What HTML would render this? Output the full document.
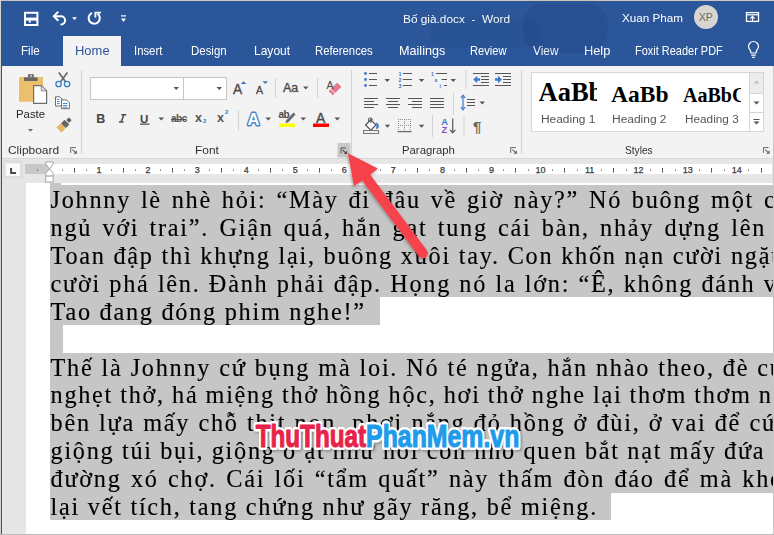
<!DOCTYPE html>
<html><head><meta charset="utf-8">
<style>
*{margin:0;padding:0;box-sizing:border-box}
html,body{width:774px;height:535px;overflow:hidden;background:#fff;font-family:"Liberation Sans",sans-serif;position:relative}
.a{position:absolute}
#top{left:0;top:0;width:774px;height:66px;background:#2b579a}
.tab{position:absolute;top:43.2px;font-size:12.4px;color:#fff;white-space:nowrap;line-height:16px;transform-origin:0 0}
#hometab{left:63px;top:36px;width:58px;height:30px;background:#f3f3f3}
#ribbon{left:0;top:66px;width:774px;height:92px;background:#f3f3f3}
.lbl{position:absolute;font-size:11.5px;color:#333;white-space:nowrap;line-height:14px;transform-origin:0 0}
.sep{position:absolute;width:1px;background:#d4d4d4}
#rulerbg{left:0;top:158px;width:774px;height:25px;background:#e6e6e6;border-top:1px solid #d6d6d6}
#doc{left:0;top:183px;width:774px;height:352px;background:#e6e6e6}
#page{left:26px;top:183px;width:760px;height:351px;background:#fff}
.sel{position:absolute;background:#c6c6c6}
.ln{position:absolute;left:50px;font-family:"Liberation Serif",serif;font-size:24.27px;line-height:28px;height:28px;color:#000;white-space:nowrap;letter-spacing:1.733px;margin-left:0.52px;opacity:0.999;-webkit-text-stroke:0.15px #000}
</style></head><body>
<div id="top" class="a"></div>
<div id="hometab" class="a"></div>
<div id="t_file" class="tab" style="left:21.06px;transform:scaleX(0.9380)">File</div>
<div id="t_home" class="tab" style="left:74.71px;color:#2b579a;transform:scaleX(1.0468)">Home</div>
<div id="t_insert" class="tab" style="left:134.10px;transform:scaleX(0.9134)">Insert</div>
<div id="t_design" class="tab" style="left:191.05px;transform:scaleX(0.9245)">Design</div>
<div id="t_layout" class="tab" style="left:253.85px;transform:scaleX(0.9701)">Layout</div>
<div id="t_ref" class="tab" style="left:315.27px;transform:scaleX(0.9107)">References</div>
<div id="t_mail" class="tab" style="left:398.98px;transform:scaleX(1.0201)">Mailings</div>
<div id="t_review" class="tab" style="left:469.94px;transform:scaleX(0.9017)">Review</div>
<div id="t_view" class="tab" style="left:532.60px;transform:scaleX(0.9563)">View</div>
<div id="t_help" class="tab" style="left:584.15px;transform:scaleX(1.0327)">Help</div>
<div id="t_foxit" class="tab" style="left:634.94px;transform:scaleX(0.8855)">Foxit Reader PDF</div>
<div id="t_title" class="tab" style="left:403.34px;top:10.5px;font-size:11.4px;transform:scaleX(1.0390)">Bố già.docx&nbsp; - &nbsp;Word</div>
<div id="t_user" class="tab" style="left:622.00px;top:9.5px;font-size:11.4px;transform:scaleX(1.0227)">Xuan Pham</div>
<svg class="a" style="left:0;top:0" width="774" height="66" viewBox="0 0 774 66">
 <rect x="523" y="3" width="85" height="50" rx="22" fill="#001040" opacity="0.09"/>
 <rect x="430" y="18" width="110" height="30" rx="15" fill="#001040" opacity="0.05"/>
 <!-- save -->
 <g fill="none" stroke="#fff" stroke-width="2">
  <rect x="25" y="12.8" width="12.4" height="12.2"/>
 </g>
 <rect x="25" y="17.6" width="12.4" height="3" fill="#fff"/>
 <rect x="28.8" y="20.5" width="2" height="2" fill="#fff"/>
 <!-- undo -->
 <path d="M54.5 16.2 H61 A4.1 4.1 0 0 1 61 24.4 H60.5" fill="none" stroke="#fff" stroke-width="2"/>
 <path d="M57.6 12.4 L53.8 16.2 L57.6 20" fill="none" stroke="#fff" stroke-width="2" stroke-linecap="square"/>
 <path d="M72 17.2 H77 L74.5 20 Z" fill="#fff"/>
 <!-- redo -->
 <path d="M92 12.9 A5.6 5.6 0 1 0 97.6 13.6" fill="none" stroke="#fff" stroke-width="2"/>
 <path d="M95.4 17.6 V12.6 H100.9" fill="none" stroke="#fff" stroke-width="1.8"/>
 <!-- customize -->
 <rect x="121" y="15.3" width="5" height="1.2" fill="#fff"/>
 <path d="M121 18.4 H126 L123.5 21.9 Z" fill="#fff"/>
 <!-- avatar -->
 <circle cx="706" cy="17" r="12" fill="#d8d5d1"/>
 <text x="705.8" y="21" font-family="Liberation Sans" font-size="10.6" fill="#6a6a6a" text-anchor="middle">XP</text>
 <!-- ribbon display -->
 <rect x="746.5" y="12.6" width="12" height="8.8" fill="none" stroke="#fff" stroke-width="1.3"/>
 <rect x="746.5" y="14.2" width="12" height="1.2" fill="#fff"/>
 <path d="M752.5 21.4 V17" stroke="#fff" stroke-width="1.2"/>
 <path d="M750.3 18.6 L752.5 16.4 L754.7 18.6" fill="none" stroke="#fff" stroke-width="1.2"/>
 <!-- lightbulb -->
 <path d="M751 53 C751 50 748.5 49 748.5 46.5 A5 5 0 0 1 758.5 46.5 C758.5 49 756 50 756 53 Z" fill="none" stroke="#fff" stroke-width="1.2"/>
 <path d="M751.3 55.2 H755.7 M752.2 57.3 H754.8" stroke="#fff" stroke-width="1.2"/>
</svg>

<div id="ribbon" class="a"></div>
<div id="l_paste" class="lbl" style="left:15.90px;top:107px;font-size:11.6px;color:#262626;transform:scaleX(0.9805)">Paste</div>
<div id="l_clip" class="lbl" style="left:8.00px;top:142.5px;transform:scaleX(1.0369)">Clipboard</div>
<div id="l_font" class="lbl" style="left:195.46px;top:142.5px;transform:scaleX(1.0371)">Font</div>
<div id="l_para" class="lbl" style="left:401.83px;top:143px;transform:scaleX(0.9849)">Paragraph</div>
<div id="l_styles" class="lbl" style="left:625.00px;top:142.5px;transform:scaleX(0.8840)">Styles</div>
<div id="fontbox" class="a" style="left:90px;top:77px;width:94px;height:23px;background:#fff;border:1px solid #c6c6c6"></div>
<div id="sizebox" class="a" style="left:183px;top:77px;width:44px;height:23px;background:#fff;border:1px solid #c6c6c6"></div>
<div class="a" style="left:531px;top:72px;width:233px;height:60px;background:#fff;border:1px solid #d6d6d6"></div>
<div class="a" style="left:749px;top:73px;width:14px;height:20px;background:#ececec;border-left:1px solid #d6d6d6"></div>
<div class="a" style="left:749px;top:93px;width:14px;height:38px;border-left:1px solid #d6d6d6;border-top:1px solid #d6d6d6"></div>
<div class="a" style="left:749px;top:112px;width:14px;height:1px;background:#d6d6d6"></div>
<div class="a" style="left:538.5px;top:76px;width:58px;height:32px;overflow:hidden;white-space:nowrap;font-family:'Liberation Serif',serif;font-weight:bold;font-size:26.5px;line-height:32px;color:#000">AaBb</div>
<div class="a" style="left:611px;top:79px;white-space:nowrap;font-family:'Liberation Serif',serif;font-weight:bold;font-size:23.5px;line-height:30px;color:#000;letter-spacing:0px">AaBb</div>
<div class="a" style="left:683px;top:80px;width:58px;height:30px;overflow:hidden;white-space:nowrap;font-family:'Liberation Serif',serif;font-weight:bold;font-size:20px;line-height:30px;color:#000">AaBbCc</div>
<div id="l_h1" class="lbl" style="left:540.79px;top:111.5px;font-size:11.7px;color:#555;transform:scaleX(1.0195)">Heading 1</div>
<div id="l_h2" class="lbl" style="left:612.49px;top:111.5px;font-size:11.7px;color:#555;transform:scaleX(1.0232)">Heading 2</div>
<div id="l_h3" class="lbl" style="left:684.98px;top:111.5px;font-size:11.7px;color:#555;transform:scaleX(1.0079)">Heading 3</div>
<svg class="a" style="left:0;top:66px" width="774" height="92" viewBox="0 66 774 92">
 <!-- separators -->
 <g fill="#d2d2d2">
  <rect x="81" y="70" width="1" height="84"/>
  <rect x="351" y="70" width="1" height="84"/>
  <rect x="521" y="70" width="1" height="84"/>
  <rect x="275" y="78" width="1" height="20"/>
  <rect x="317" y="78" width="1" height="20"/>
  <rect x="238" y="110" width="1" height="21"/>
  <rect x="465.5" y="70" width="1" height="19"/>
  <rect x="453" y="93" width="1" height="22"/>
  <rect x="432" y="115" width="1" height="22"/>
  <rect x="463.5" y="115" width="1" height="22"/>
 </g>
 <!-- launchers -->
 <path d="M70.7 152.9 V147.6 H75.8" fill="none" stroke="#666" stroke-width="1"/><path d="M72.4 149.6 L75.7 152.7" stroke="#666" stroke-width="1.1"/><path d="M73.4 153.7 H76.9 V150.2 Z" fill="#666"/>
 <path d="M510.7 152.9 V147.6 H515.8" fill="none" stroke="#666" stroke-width="1"/><path d="M512.4 149.6 L515.7 152.7" stroke="#666" stroke-width="1.1"/><path d="M513.4 153.7 H516.9 V150.2 Z" fill="#666"/>
 <path d="M763.4 152.9 V147.6 H768.5" fill="none" stroke="#666" stroke-width="1"/><path d="M765.1 149.6 L768.4 152.7" stroke="#666" stroke-width="1.1"/><path d="M766.1 153.7 H769.6 V150.2 Z" fill="#666"/>
 <rect x="337.5" y="143" width="13" height="14.5" fill="#c8c8c8"/>
 <path d="M341.0 153.3 V148.0 H346.1" fill="none" stroke="#505050" stroke-width="1"/><path d="M342.7 150.0 L346.0 153.1" stroke="#505050" stroke-width="1.1"/><path d="M343.7 154.1 H347.2 V150.6 Z" fill="#505050"/>
 <!-- paste -->
 <path d="M19 78.5 Q19 77 20.5 77 H43 V101.8 H19 Z" fill="#eabf6e"/>
 <rect x="24" y="77.4" width="13.6" height="3.6" fill="#686868"/>
 <rect x="28" y="74.2" width="5.8" height="3.4" fill="#686868"/>
 <rect x="30.2" y="75.3" width="1.6" height="1.4" fill="#f3f3f3"/>
 <path d="M33.6 85.6 H41.3 L46.6 90.9 V103.3 H33.6 Z" fill="#fff" stroke="#6e6e6e" stroke-width="1.2"/>
 <path d="M41.3 85.6 L46.6 90.9 H41.3 Z" fill="#e6e6e6" stroke="#6e6e6e" stroke-width="0.8"/>
 <path d="M28 129 H33 L30.5 131.8 Z" fill="#6a6a6a"/>
 <!-- scissors -->
 <circle cx="58.6" cy="84" r="2.7" fill="none" stroke="#3a7dc9" stroke-width="1.3"/>
 <circle cx="67.1" cy="84" r="2.7" fill="none" stroke="#3a7dc9" stroke-width="1.3"/>
 <path d="M58.8 72.6 L65.4 81.6 M67.4 72.6 L60.8 81.6" stroke="#686868" stroke-width="1.7"/>
 <!-- copy -->
 <path d="M55.5 96.8 H59.8 L61.8 98.8 V106 H55.5 Z" fill="#fff" stroke="#6e6e6e" stroke-width="1"/>
 <path d="M61.6 99.9 H66.6 L69.4 102.7 V108.7 H61.6 Z" fill="#fff" stroke="#6e6e6e" stroke-width="1"/>
 <path d="M57 99.5 H59.5 M57 101.5 H59.5 M57 103.5 H59.5 M63 103.5 H67.5 M63 105.5 H67.5 M63 107.3 H67.5" stroke="#3a7dc9" stroke-width="0.9"/>
 <!-- format painter -->
 <g transform="translate(65.1,124) rotate(-45) scale(0.9)">
  <path d="M-2.6 -3.6 L-9.6 -4.3 L-9.6 4.3 L-2.6 3.6 Z" fill="#eab86a"/>
  <rect x="-2.6" y="-3.8" width="5.6" height="7.6" rx="0.8" fill="#646464"/>
  <rect x="4" y="-2.3" width="4.2" height="4.6" rx="1.2" fill="#646464"/>
 </g>
 <!-- dropdown arrows for boxes -->
 <path d="M173.5 87 H179 L176.25 90 Z" fill="#555"/>
 <path d="M216.5 87 H222 L219.25 90 Z" fill="#555"/>
 <!-- grow/shrink -->
 <path d="M240.8 84 L243.6 81.2 L246.4 84 Z" fill="#3c78c3"/>
 <path d="M262.6 81.2 L268 81.2 L265.3 84 Z" fill="#3c78c3"/>
 <path d="M303 86.5 H308.5 L305.75 89.5 Z" fill="#555"/>
 <!-- clear formatting -->
 <g transform="translate(335,89) rotate(-45) scale(0.86)"><rect x="-7" y="-3.4" width="14" height="6.8" rx="0.6" fill="#e57a8c"/><rect x="-4.2" y="-3.6" width="0.9" height="7.2" fill="#f3f3f3"/></g>
 <!-- row 2 arrows -->
 <path d="M158.5 117.5 H164 L161.25 120.5 Z" fill="#555"/>
 <path d="M265.5 117.5 H271 L268.25 120.5 Z" fill="#555"/>
 <path d="M300.5 117.5 H306 L303.25 120.5 Z" fill="#555"/>
 <path d="M334.5 117.5 H340 L337.25 120.5 Z" fill="#555"/>
 <!-- italic -->
 <path d="M121.3 114.8 H126.3 M123.9 114.8 L121.1 122 M118.9 122 H123.6" fill="none" stroke="#505050" stroke-width="1.6"/>
 <!-- underline -->
 <rect x="140" y="123.5" width="9.5" height="1.2" fill="#444"/>
 <!-- text effects -->
 <text x="247.6" y="124.6" font-family="Liberation Sans" font-weight="bold" font-size="16.5" fill="#fff" stroke="#4a86cc" stroke-width="2.8" stroke-linejoin="round" paint-order="stroke">A</text>
 <!-- highlight -->
 <rect x="279" y="123.5" width="16" height="3.5" fill="#ffff00"/>
 <path d="M286 120.5 L293.5 112.5 L295.5 114.5 L288 122.5 L285.5 123 Z" fill="#6a6a6a"/>
 <rect x="313" y="123.5" width="16" height="3.5" fill="#ff0000"/>
 <!-- paragraph: bullets -->
 <g fill="#3c78c3"><circle cx="365.5" cy="73.5" r="1.4"/><circle cx="365.5" cy="79.5" r="1.4"/><circle cx="365.5" cy="85.5" r="1.4"/></g>
 <g stroke="#555" stroke-width="1"><path d="M369 73.5 H377 M369 79.5 H377 M369 85.5 H377"/></g>
 <path d="M384.5 79 H390 L387.25 82 Z" fill="#555"/>
 <!-- numbering -->
 <g fill="#3c78c3" font-family="Liberation Sans" font-size="5.5" font-weight="bold"><text x="398.5" y="75.8">1</text><text x="398.5" y="81.8">2</text><text x="398.5" y="87.8">3</text></g>
 <g stroke="#555" stroke-width="1"><path d="M403 73.5 H412 M403 79.5 H412 M403 85.5 H412"/></g>
 <path d="M418.8 79 H424.3 L421.55 82 Z" fill="#555"/>
 <!-- multilevel -->
 <g fill="#3c78c3" font-family="Liberation Sans" font-size="5" font-weight="bold"><text x="431" y="75.8">1</text><text x="434.5" y="81.5">a</text><text x="439.5" y="87.5">i</text></g>
 <g stroke="#555" stroke-width="1"><path d="M436 73.5 H447 M441.5 79.5 H447 M444 85.5 H447"/></g>
 <path d="M450.5 79 H456 L453.25 82 Z" fill="#555"/>
 <!-- indent -->
 <g stroke="#555" stroke-width="1"><path d="M473 73.5 H489 M481 76.5 H489 M481 79.5 H489 M481 82.5 H489 M473 85.5 H489"/></g>
 <path d="M473.2 79.5 L477.2 75.8 V83.2 Z" fill="#3a7dc9"/><path d="M476 79.5 H480" stroke="#3a7dc9" stroke-width="2.6"/>
 <g stroke="#555" stroke-width="1"><path d="M495 73.5 H511 M503 76.5 H511 M503 79.5 H511 M503 82.5 H511 M495 85.5 H511"/></g>
 <path d="M502 79.5 L498 75.8 V83.2 Z" fill="#3a7dc9"/><path d="M495 79.5 H499" stroke="#3a7dc9" stroke-width="2.6"/>
 <!-- alignment -->
 <g stroke="#555" stroke-width="1">
  <path d="M364 98.5 H378 M364 101.5 H374 M364 104.5 H378 M364 107.5 H374"/>
  <path d="M386 98.5 H400 M388 101.5 H398 M386 104.5 H400 M388 107.5 H398"/>
  <path d="M408 98.5 H422 M412 101.5 H422 M408 104.5 H422 M412 107.5 H422"/>
  <path d="M430 98.5 H444 M430 101.5 H444 M430 104.5 H444 M430 107.5 H444"/>
  <path d="M467 99.5 H475 M467 102.5 H475 M467 105.5 H475"/>
 </g>
 <path d="M463 95.5 V109.5" stroke="#3c78c3" stroke-width="1.2"/>
 <path d="M460.8 98 L463 95.2 L465.2 98 M460.8 107 L463 109.8 L465.2 107" fill="none" stroke="#3c78c3" stroke-width="1.2"/>
 <path d="M479.5 101.5 H485 L482.25 104.5 Z" fill="#555"/>
 <!-- shading -->
 <path d="M365.6 125 L370.8 119.8 L376 125 L370.8 130.2 Z" fill="#fff" stroke="#505050" stroke-width="1.15"/>
 <path d="M368.6 121.5 V118.9 Q368.6 118.2 369.3 118.2 H371.4 Q372.1 118.2 372.1 118.9 V120.3" fill="none" stroke="#505050" stroke-width="1"/>
 <path d="M370.9 118.6 V123.2" stroke="#505050" stroke-width="1"/>
 <path d="M376.2 122.3 Q379.6 124 378.6 127.6 Q377.8 129.4 376.3 129.2 Z" fill="#3a7dc9"/>
 <rect x="363.6" y="130.6" width="15" height="2.8" fill="#fff" stroke="#6a6a6a" stroke-width="1"/>
 <path d="M384.8 124.8 H390.2 L387.5 127.8 Z" fill="#555"/>
 <!-- borders -->
 <g fill="#8a8a8a"><rect x="398" y="119.0" width="1" height="1"/><rect x="398" y="125.0" width="1" height="1"/><rect x="400" y="119.0" width="1" height="1"/><rect x="400" y="125.0" width="1" height="1"/><rect x="402" y="119.0" width="1" height="1"/><rect x="402" y="125.0" width="1" height="1"/><rect x="404" y="119.0" width="1" height="1"/><rect x="404" y="125.0" width="1" height="1"/><rect x="406" y="119.0" width="1" height="1"/><rect x="406" y="125.0" width="1" height="1"/><rect x="408" y="119.0" width="1" height="1"/><rect x="408" y="125.0" width="1" height="1"/><rect x="410" y="119.0" width="1" height="1"/><rect x="410" y="125.0" width="1" height="1"/><rect x="398" y="119" width="1" height="1"/><rect x="404" y="119" width="1" height="1"/><rect x="410" y="119" width="1" height="1"/><rect x="398" y="121" width="1" height="1"/><rect x="404" y="121" width="1" height="1"/><rect x="410" y="121" width="1" height="1"/><rect x="398" y="123" width="1" height="1"/><rect x="404" y="123" width="1" height="1"/><rect x="410" y="123" width="1" height="1"/><rect x="398" y="125" width="1" height="1"/><rect x="404" y="125" width="1" height="1"/><rect x="410" y="125" width="1" height="1"/><rect x="398" y="127" width="1" height="1"/><rect x="404" y="127" width="1" height="1"/><rect x="410" y="127" width="1" height="1"/><rect x="398" y="129" width="1" height="1"/><rect x="404" y="129" width="1" height="1"/><rect x="410" y="129" width="1" height="1"/><rect x="398" y="131" width="1" height="1"/><rect x="404" y="131" width="1" height="1"/><rect x="410" y="131" width="1" height="1"/></g>
 <rect x="397.5" y="131" width="14" height="1.2" fill="#666"/>
 <path d="M418.8 124.8 H424.3 L421.55 127.8 Z" fill="#555"/>
 <!-- sort -->
 <text x="441.2" y="125.3" font-family="Liberation Sans" font-size="9.4" font-weight="bold" fill="#3c78c3">A</text>
 <text x="441.6" y="133" font-family="Liberation Sans" font-size="9.4" font-weight="bold" fill="#8a4fc4">Z</text>
 <path d="M452.7 118.5 V132.5" stroke="#555" stroke-width="1.2"/>
 <path d="M450 129.8 L452.7 132.8 L455.4 129.8" fill="none" stroke="#555" stroke-width="1.2"/>
 <!-- pilcrow -->
 <text x="473" y="132" font-family="Liberation Sans" font-size="15" font-weight="bold" fill="#666">¶</text>
 <!-- styles scroll arrows -->
 <path d="M753.5 83.5 L756.5 80.5 L759.5 83.5 Z" fill="#c0c0c0"/>
 <path d="M753.5 101.5 H759.5 L756.5 104.5 Z" fill="#555"/>
 <rect x="753.5" y="119" width="6" height="1" fill="#555"/>
 <path d="M753.5 121.5 H759.5 L756.5 124.5 Z" fill="#555"/>
</svg>
<div class="a" style="left:96.3px;top:112px;font-weight:bold;font-size:12.5px;color:#444;line-height:14px">B</div>

<div class="a" style="left:140px;top:111.5px;font-weight:bold;font-size:11.5px;color:#444;line-height:14px">U</div>
<div class="a" style="left:171px;top:112px;font-weight:bold;font-size:10px;color:#555;line-height:14px;letter-spacing:-0.5px;text-decoration:line-through">abc</div>
<div class="a" style="left:195px;top:111px;font-weight:bold;font-size:12.5px;color:#555;line-height:14px">x</div>
<div class="a" style="left:203px;top:117px;font-weight:bold;font-size:6px;color:#3c78c3;line-height:8px">2</div>
<div class="a" style="left:217px;top:111px;font-weight:bold;font-size:12.5px;color:#555;line-height:14px">x</div>
<div class="a" style="left:225px;top:108px;font-weight:bold;font-size:6px;color:#3c78c3;line-height:8px">2</div>
<div class="a" style="left:233px;top:82.6px;font-size:13.8px;color:#4a4a4a;line-height:14px;-webkit-text-stroke:0.35px #4a4a4a">A</div>
<div class="a" style="left:256px;top:83.5px;font-size:10.5px;color:#4a4a4a;line-height:12px;-webkit-text-stroke:0.3px #4a4a4a">A</div>
<div class="a" style="left:283px;top:80.5px;font-size:12.5px;color:#4a4a4a;line-height:14px;-webkit-text-stroke:0.35px #4a4a4a">Aa</div>
<div class="a" style="left:326.4px;top:78.6px;font-size:10.5px;color:#555;line-height:12px;-webkit-text-stroke:0.2px #555">A</div>

<div class="a" style="left:278.5px;top:109px;font-size:10px;font-weight:bold;color:#4a4a4a;line-height:12px;letter-spacing:-0.6px">ab</div>
<div class="a" style="left:316px;top:110.5px;font-size:14px;color:#4a4a4a;line-height:14px;-webkit-text-stroke:0.4px #4a4a4a">A</div>
<div id="rulerbg" class="a"></div>
<div id="doc" class="a"></div>
<svg class="a" style="left:0;top:158px" width="774" height="25" viewBox="0 158 774 25">
<rect x="3" y="160" width="20" height="18.5" fill="#dedede"/><rect x="5.6" y="163.3" width="14.3" height="12.6" fill="#fafafa"/>
<path d="M11.1 168 V173.1 H16" fill="none" stroke="#4a4a4a" stroke-width="2"/>
<rect x="25" y="164" width="747" height="10" fill="#fff"/>
<rect x="25" y="164" width="25" height="10" fill="#c8c8c8"/>
<text x="99.05" y="172.7" font-family="Liberation Sans" font-size="9" fill="#3a3a3a" stroke="#3a3a3a" stroke-width="0.25" text-anchor="middle">1</text>
<text x="148.10" y="172.7" font-family="Liberation Sans" font-size="9" fill="#3a3a3a" stroke="#3a3a3a" stroke-width="0.25" text-anchor="middle">2</text>
<text x="197.15" y="172.7" font-family="Liberation Sans" font-size="9" fill="#3a3a3a" stroke="#3a3a3a" stroke-width="0.25" text-anchor="middle">3</text>
<text x="246.20" y="172.7" font-family="Liberation Sans" font-size="9" fill="#3a3a3a" stroke="#3a3a3a" stroke-width="0.25" text-anchor="middle">4</text>
<text x="295.25" y="172.7" font-family="Liberation Sans" font-size="9" fill="#3a3a3a" stroke="#3a3a3a" stroke-width="0.25" text-anchor="middle">5</text>
<text x="344.30" y="172.7" font-family="Liberation Sans" font-size="9" fill="#3a3a3a" stroke="#3a3a3a" stroke-width="0.25" text-anchor="middle">6</text>
<text x="393.35" y="172.7" font-family="Liberation Sans" font-size="9" fill="#3a3a3a" stroke="#3a3a3a" stroke-width="0.25" text-anchor="middle">7</text>
<text x="442.40" y="172.7" font-family="Liberation Sans" font-size="9" fill="#3a3a3a" stroke="#3a3a3a" stroke-width="0.25" text-anchor="middle">8</text>
<text x="491.45" y="172.7" font-family="Liberation Sans" font-size="9" fill="#3a3a3a" stroke="#3a3a3a" stroke-width="0.25" text-anchor="middle">9</text>
<text x="540.50" y="172.7" font-family="Liberation Sans" font-size="9" fill="#3a3a3a" stroke="#3a3a3a" stroke-width="0.25" text-anchor="middle">10</text>
<text x="589.55" y="172.7" font-family="Liberation Sans" font-size="9" fill="#3a3a3a" stroke="#3a3a3a" stroke-width="0.25" text-anchor="middle">11</text>
<text x="638.60" y="172.7" font-family="Liberation Sans" font-size="9" fill="#3a3a3a" stroke="#3a3a3a" stroke-width="0.25" text-anchor="middle">12</text>
<text x="687.65" y="172.7" font-family="Liberation Sans" font-size="9" fill="#3a3a3a" stroke="#3a3a3a" stroke-width="0.25" text-anchor="middle">13</text>
<text x="736.70" y="172.7" font-family="Liberation Sans" font-size="9" fill="#3a3a3a" stroke="#3a3a3a" stroke-width="0.25" text-anchor="middle">14</text>
<g fill="#555"><rect x="37" y="169.5" width="1" height="1.2"/><rect x="62" y="169.5" width="1" height="1.2"/><rect x="74" y="168" width="1" height="4.6"/><rect x="86" y="169.5" width="1" height="1.2"/><rect x="111" y="169.5" width="1" height="1.2"/><rect x="123" y="168" width="1" height="4.6"/><rect x="135" y="169.5" width="1" height="1.2"/><rect x="160" y="169.5" width="1" height="1.2"/><rect x="172" y="168" width="1" height="4.6"/><rect x="184" y="169.5" width="1" height="1.2"/><rect x="209" y="169.5" width="1" height="1.2"/><rect x="221" y="168" width="1" height="4.6"/><rect x="233" y="169.5" width="1" height="1.2"/><rect x="258" y="169.5" width="1" height="1.2"/><rect x="270" y="168" width="1" height="4.6"/><rect x="282" y="169.5" width="1" height="1.2"/><rect x="307" y="169.5" width="1" height="1.2"/><rect x="319" y="168" width="1" height="4.6"/><rect x="331" y="169.5" width="1" height="1.2"/><rect x="356" y="169.5" width="1" height="1.2"/><rect x="368" y="168" width="1" height="4.6"/><rect x="380" y="169.5" width="1" height="1.2"/><rect x="405" y="169.5" width="1" height="1.2"/><rect x="417" y="168" width="1" height="4.6"/><rect x="429" y="169.5" width="1" height="1.2"/><rect x="454" y="169.5" width="1" height="1.2"/><rect x="466" y="168" width="1" height="4.6"/><rect x="478" y="169.5" width="1" height="1.2"/><rect x="503" y="169.5" width="1" height="1.2"/><rect x="515" y="168" width="1" height="4.6"/><rect x="528" y="169.5" width="1" height="1.2"/><rect x="552" y="169.5" width="1" height="1.2"/><rect x="564" y="168" width="1" height="4.6"/><rect x="577" y="169.5" width="1" height="1.2"/><rect x="601" y="169.5" width="1" height="1.2"/><rect x="613" y="168" width="1" height="4.6"/><rect x="626" y="169.5" width="1" height="1.2"/><rect x="650" y="169.5" width="1" height="1.2"/><rect x="662" y="168" width="1" height="4.6"/><rect x="675" y="169.5" width="1" height="1.2"/><rect x="699" y="169.5" width="1" height="1.2"/><rect x="711" y="168" width="1" height="4.6"/><rect x="724" y="169.5" width="1" height="1.2"/><rect x="748" y="169.5" width="1" height="1.2"/><rect x="761" y="168" width="1" height="4.6"/></g>
<path d="M45.8 161.9 H53.2 V163.9 L49.5 169 L45.8 163.9 Z" fill="#fff" stroke="#a8a8a8" stroke-width="1"/>
<path d="M49.5 169 L53.2 173.2 V176.1 H45.8 V173.2 Z" fill="#fff" stroke="#a8a8a8" stroke-width="1"/>
<rect x="45.8" y="176.1" width="7.4" height="5.9" fill="#fff" stroke="#a8a8a8" stroke-width="1"/>
</svg>

<div id="page" class="a"></div>

<!-- selection rects -->
<div class="sel" style="left:50px;top:183px;width:11px;height:2px"></div>
<div class="sel" style="left:50px;top:185px;width:723px;height:112px"></div>
<div class="sel" style="left:50px;top:297px;width:330px;height:28px"></div>
<div class="sel" style="left:50px;top:325px;width:13px;height:28px"></div>
<div class="sel" style="left:50px;top:353px;width:723px;height:140px"></div>
<div class="sel" style="left:50px;top:493px;width:561px;height:27px"></div>

<div class="ln" style="top:186.30px;word-spacing:2.07px">Johnny lè nhè hỏi: “Mày đi đâu về giờ này?” Nó buông một câu</div>
<div class="ln" style="top:214.18px;word-spacing:2.47px">ngủ với trai”. Giận quá, hắn gạt tung cái bàn, nhảy dựng lên đòi</div>
<div class="ln" style="top:242.06px;word-spacing:0.07px">Toan đập thì khựng lại, buông xuôi tay. Con khốn nạn cười ngặt</div>
<div class="ln" style="top:269.94px;word-spacing:0.55px">cười phá lên. Đành phải đập. Họng nó la lớn: “Ê, không đánh vô</div>
<div class="ln" style="top:297.82px;word-spacing:0.00px">Tao đang đóng phim nghe!”</div>
<div class="ln" style="top:353.58px;word-spacing:0.31px">Thế là Johnny cứ bụng mà loi. Nó té ngửa, hắn nhào theo, đè cứng</div>
<div class="ln" style="top:381.46px;word-spacing:-0.68px">nghẹt thở, há miệng thở hồng hộc, hơi thở nghe lại thơm thơm nồng</div>
<div class="ln" style="top:409.34px;word-spacing:0.50px">bên lựa mấy chỗ thịt non, phơi nắng đỏ hồng ở đùi, ở vai để cứ</div>
<div class="ln" style="top:437.22px;word-spacing:-0.33px">giộng túi bụi, giộng ồ ạt như hồi còn nhỏ quen bắt nạt mấy đứa</div>
<div class="ln" style="top:465.10px;word-spacing:1.61px">đường xó chợ. Cái lối “tẩm quất” này thấm đòn đáo để mà khó</div>
<div class="ln" style="top:492.98px;word-spacing:0.00px">lại vết tích, tang chứng như gãy răng, bể miệng.</div>

<svg class="a" style="left:0;top:0" width="774" height="535" viewBox="0 0 774 535">
 <defs>
  <filter id="sh" x="-20%" y="-20%" width="140%" height="140%"><feDropShadow dx="-0.5" dy="1.5" stdDeviation="1.5" flood-color="#000" flood-opacity="0.35"/></filter>
  <filter id="sh2" x="-10%" y="-30%" width="120%" height="160%"><feDropShadow dx="1.5" dy="1.5" stdDeviation="1.2" flood-color="#000" flood-opacity="0.3"/></filter>
 </defs>
 <path d="M348.0 153.2 L377.9 168.5 L370.3 174.7 L426.9 250.3 A5.0 5.0 0 0 1 418.9 256.3 L362.3 180.7 L353.8 186.0 Z" fill="#f6424b" filter="url(#sh)"/>
 <g font-family="Liberation Sans" font-weight="bold" font-size="31" stroke-linejoin="round">
  <g filter="url(#sh2)" fill="#fff" stroke="#fff" stroke-width="6">
   <text transform="translate(255.7,446.5) scale(0.782,1)">ThuThuat</text>
   <text transform="translate(366.1,446.5) scale(0.802,1)">PhanMem.vn</text>
  </g>
  <text transform="translate(255.7,446.5) scale(0.782,1)" fill="#e8234a" stroke="#e8234a" stroke-width="1.1">ThuThuat</text>
  <text transform="translate(366.1,446.5) scale(0.802,1)" fill="#1f9bea" stroke="#1f9bea" stroke-width="1.1">PhanMem.vn</text>
 </g>
 <rect x="0" y="0" width="774" height="1" fill="#cdc5bc"/>
 <rect x="0" y="0" width="1" height="535" fill="#d6d2cc"/>
 <rect x="1" y="1" width="1" height="534" fill="#2b579a"/>
 <rect x="773" y="66" width="1" height="469" fill="#c8c8c8"/>
 <rect x="0" y="534" width="774" height="1" fill="#bcbcbc"/>
</svg>
</body></html>
